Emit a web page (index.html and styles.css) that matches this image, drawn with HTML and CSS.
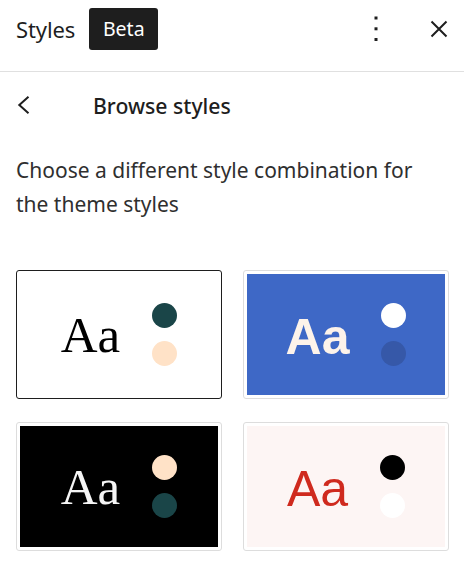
FILE: index.html
```html
<!DOCTYPE html>
<html>
<head>
<meta charset="utf-8">
<link rel="stylesheet" href="styles.css">
</head>
<body>
<div class="panel">
  <header class="header">
    <div class="title-group">
      <h2 class="title">Styles</h2>
      <span class="badge">Beta</span>
    </div>
    <div class="actions">
      <button class="icon-btn" aria-label="Options">
        <svg width="24" height="32" viewBox="0 0 24 32"><rect x="10.5" y="3.5" width="3" height="3" fill="#1e1e1e"/><rect x="10.5" y="14.3" width="3" height="3" fill="#1e1e1e"/><rect x="10.5" y="25" width="3" height="3" fill="#1e1e1e"/></svg>
      </button>
      <button class="icon-btn" aria-label="Close">
        <svg width="24" height="24" viewBox="0 0 24 24"><path d="M4.5 4.5 L19.5 19.5 M19.5 4.5 L4.5 19.5" stroke="#1e1e1e" stroke-width="2" fill="none"/></svg>
      </button>
    </div>
  </header>
  <div class="nav">
    <button class="back-btn" aria-label="Back">
      <svg width="24" height="24" viewBox="0 0 24 24"><path d="M16.5 3.8 L7.3 12 L16.5 20.2" stroke="#1e1e1e" stroke-width="2" fill="none"/></svg>
    </button>
    <h2 class="nav-title">Browse styles</h2>
  </div>
  <p class="desc">Choose a different style combination for the theme styles</p>
  <div class="grid">
    <div class="card selected">
      <div class="preview p-default">
        <span class="aa serif">Aa</span>
        <div class="dots"><span class="dot c-teal"></span><span class="dot c-peach"></span></div>
      </div>
    </div>
    <div class="card">
      <div class="preview p-blue">
        <span class="aa sans-bold">Aa</span>
        <div class="dots"><span class="dot c-white"></span><span class="dot c-darkblue"></span></div>
      </div>
    </div>
    <div class="card">
      <div class="preview p-black">
        <span class="aa serif light">Aa</span>
        <div class="dots"><span class="dot c-peach"></span><span class="dot c-teal"></span></div>
      </div>
    </div>
    <div class="card">
      <div class="preview p-pink">
        <span class="aa sans red">Aa</span>
        <div class="dots"><span class="dot c-black"></span><span class="dot c-white"></span></div>
      </div>
    </div>
  </div>
</div>
</body>
</html>
```
FILE: styles.css
```css
* { box-sizing: border-box; }
body {
  margin: 0;
  background: #fff;
  font-family: "Noto Sans", "Open Sans", sans-serif;
  color: #1e1e1e;
}
.panel { width: 464px; }
.header {
  height: 72px;
  border-bottom: 1px solid #e0e0e0;
  display: flex;
  align-items: center;
  justify-content: space-between;
  padding: 0 1px 14px 16px;
}
.title-group { display: flex; align-items: center; gap: 14px; }
.title {
  margin: 0;
  font-size: 22px;
  font-weight: 400;
  letter-spacing: -0.1px;
}
.badge {
  background: #1e1e1e;
  color: #fff;
  border-radius: 3px;
  height: 42px;
  width: 69px;
  display: flex;
  align-items: center;
  justify-content: center;
  font-size: 19.5px;
}
.actions { display: flex; align-items: center; gap: 15px; }
.icon-btn {
  width: 48px;
  height: 48px;
  border: 0;
  background: none;
  padding: 0;
  display: flex;
  align-items: center;
  justify-content: center;
}
.icon-btn svg { display: block; }
.nav {
  height: 66px;
  display: flex;
  align-items: center;
  padding-left: 12px;
}
.back-btn {
  width: 24px; height: 24px;
  border: 0; background: none; padding: 0;
  display: flex;
}
.nav-title {
  margin: 0 0 0 57px;
  font-size: 21.2px;
  font-weight: 500;
}
.desc {
  margin: 15px 16px 0;
  font-size: 21px;
  line-height: 34px;
  color: #2f2f2f;
}
.grid {
  display: grid;
  grid-template-columns: 206px 206px;
  grid-auto-rows: 129px;
  column-gap: 21px;
  row-gap: 23px;
  margin: 49px 0 0 16px;
}
.card {
  border: 1px solid #dddddd;
  border-radius: 3px;
  padding: 3px;
  background: #fff;
}
.card.selected { border-color: #1e1e1e; }
.preview {
  height: 100%;
  display: flex;
  align-items: center;
  justify-content: center;
  gap: 32px;
}
.aa { line-height: 1; padding-top: 4px; }
.serif { font-family: "Liberation Serif", "Times New Roman", serif; font-size: 51px; color: #000; padding-top: 2px; }
.serif.light { color: #f5f5f5; }
.sans-bold { font-family: "Liberation Sans", Arial, sans-serif; font-weight: 700; font-size: 50px; color: #fdf3ea; }
.sans { font-family: "Liberation Sans", Arial, sans-serif; font-size: 50px; }
.red { color: #cf2a1e; }
.dots { display: flex; flex-direction: column; gap: 13px; }
.dot { width: 25px; height: 25px; border-radius: 50%; display: block; }
.p-default { background: #fff; }
.p-blue { background: #3e68c6; }
.p-black { background: #000; }
.p-pink { background: #fdf5f4; }
.c-teal { background: #1a4548; }
.c-peach { background: #ffe2c7; }
.c-white { background: #fff; }
.c-darkblue { background: #3658a8; }
.c-black { background: #000; }
```
